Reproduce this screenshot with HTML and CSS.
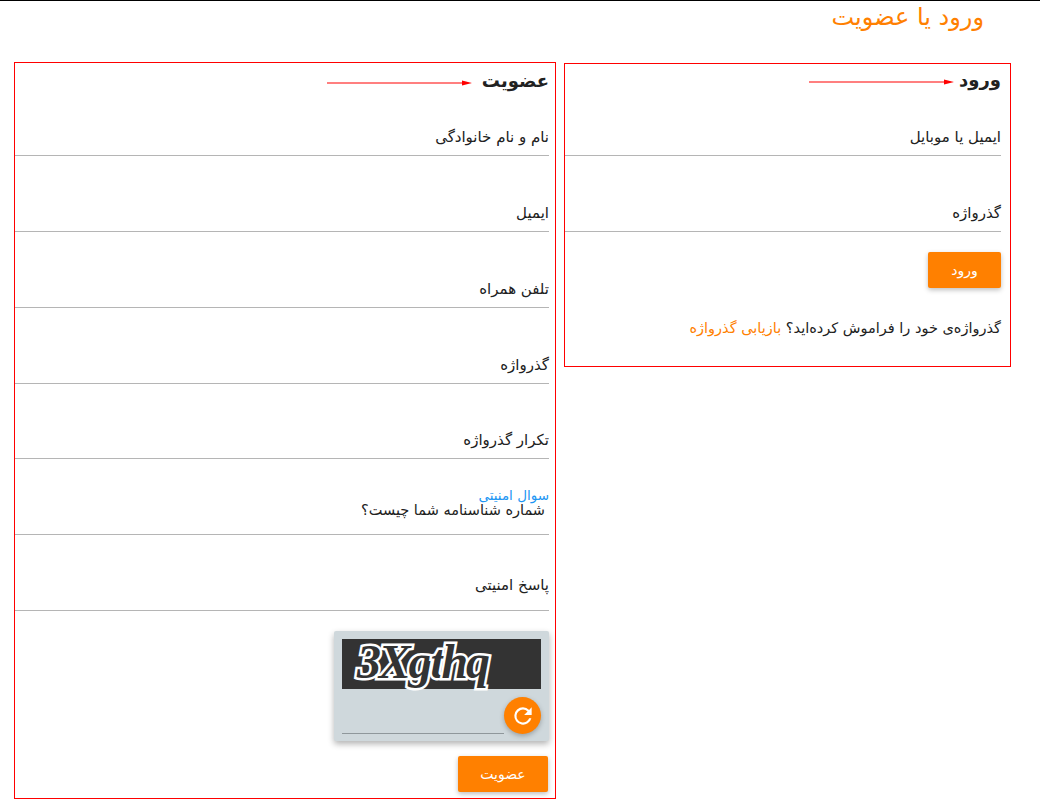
FILE: index.html
```html
<!DOCTYPE html>
<html lang="fa" dir="rtl">
  <head>
    <meta charset="UTF-8">
    <meta name="viewport" content="width=device-width, initial-scale=1.0">
    <title>ورود یا عضویت</title>
    <link rel="stylesheet" href="styles.css">
  </head>
  <body>
    <main class="page">
      <h1 class="page-title">ورود یا عضویت</h1>
      <div class="columns">
        <section class="box box-login">
          <div class="box-head">
            <h2>ورود</h2>
            <svg class="arrow" width="145" height="8" viewBox="0 0 145 8"><path d="M145 4L135 1.5V3.5H0V4.5H135V6.5Z" fill="#f00"/></svg>
          </div>
          <div class="field first"><label>ایمیل یا موبایل</label></div>
          <div class="field"><label>گذرواژه</label></div>
          <button class="btn btn-login" type="button">ورود</button>
          <p class="forgot">گذرواژه‌ی خود را فراموش کرده‌اید؟ <a href="#">بازیابی گذرواژه</a></p>
        </section>
        <section class="box box-signup">
          <div class="box-head">
            <h2>عضویت</h2>
            <svg class="arrow" width="145" height="8" viewBox="0 0 145 8"><path d="M145 4L135 1.5V3.5H0V4.5H135V6.5Z" fill="#f00"/></svg>
          </div>
          <div class="field first"><label>نام و نام خانوادگی</label></div>
          <div class="field"><label>ایمیل</label></div>
          <div class="field"><label>تلفن همراه</label></div>
          <div class="field"><label>گذرواژه</label></div>
          <div class="field short"><label>تکرار گذرواژه</label></div>
          <div class="field question">
            <small>سوال امنیتی</small>
            <span>شماره شناسنامه شما چیست؟</span>
          </div>
          <div class="field answer"><label>پاسخ امنیتی</label></div>
          <div class="captcha">
            <svg class="captcha-img" width="199" height="50" viewBox="0 0 199 50">
              <rect width="199" height="50" fill="#333"/>
              <text x="15" y="39" class="captcha-text" textLength="133">3Xgthq</text>
            </svg>
            <div class="captcha-row">
              <button class="refresh" type="button">
                <svg width="26" height="26" viewBox="0 0 24 24"><path d="M17.65 6.35A7.96 7.96 0 0 0 12 4a8 8 0 1 0 7.73 10h-2.08A6 6 0 1 1 12 6c1.66 0 3.14.69 4.22 1.78L13 11h7V4z" fill="#fff"/></svg>
              </button>
              <div class="captcha-input"></div>
            </div>
          </div>
          <button class="btn btn-signup" type="button">عضویت</button>
        </section>
      </div>
    </main>
  </body>
</html>
```

FILE: styles.css
```css
html, body {
    margin: 0;
    padding: 0;
}
body {
    font-family: "DejaVu Sans", sans-serif;
    color: #212121;
    background: #fff;
    border-top: 1px solid #000;
}
.page {
    height: 806px;
    overflow: hidden;
}
.page-title {
    margin: 0;
    padding-right: 56px;
    height: 61px;
    font-size: 24px;
    font-weight: normal;
    line-height: 32px;
    color: #ff8000;
}
.columns {
    display: flex;
    align-items: flex-start;
    gap: 8px;
    padding-right: 29px;
}
.box {
    box-sizing: border-box;
    border: 1px solid #f00;
}
.box-login {
    width: 447px;
    height: 304px;
    margin-top: 1px;
    padding-right: 9px;
}
.box-signup {
    width: 542px;
    height: 737px;
    padding-right: 6px;
}
.box-head {
    display: flex;
    align-items: center;
    height: 36px;
}
.box-login .box-head {
    gap: 5px;
    padding-bottom: 2px;
}
.box-signup .box-head {
    gap: 10px;
    padding-top: 2px;
}
.box-head h2 {
    margin: 0 0 5px;
    font-size: 18px;
    font-weight: bold;
}
.field {
    box-sizing: border-box;
    display: flex;
    flex-direction: column;
    justify-content: flex-end;
    height: 76px;
    padding-bottom: 8px;
    border-bottom: 1px solid #b5b5b5;
    font-size: 15px;
    line-height: 20px;
}
.field.first {
    height: 54px;
}
.box-signup .field.first {
    height: 55px;
}
.field.short {
    height: 75px;
}
.field.answer {
    padding-bottom: 15px;
}
.field.question {
    padding-bottom: 16px;
    line-height: 15px;
    font-size: 14.5px;
}
.field.question small {
    font-size: 13.5px;
    color: #2196f3;
}
.field.question span {
    padding-right: 4px;
}
.btn {
    display: block;
    border: 0;
    border-radius: 2px;
    background: #ff8000;
    color: #fff;
    font-family: inherit;
    font-size: 14px;
    height: 36px;
    padding: 0;
    box-shadow: 0 2px 5px rgba(0, 0, 0, 0.26);
}
.btn-login {
    width: 73px;
    margin-top: 20px;
}
.btn-signup {
    width: 90px;
    margin-top: 15px;
    margin-right: 1px;
}
.forgot {
    margin: 30px 0 0;
    font-size: 14.5px;
    line-height: 20px;
}
.forgot a {
    color: #ff8000;
    text-decoration: none;
}
.captcha {
    box-sizing: border-box;
    width: 215px;
    height: 110px;
    margin-top: 20px;
    padding: 8px;
    border-radius: 2px;
    background: #cfd8dc;
    box-shadow: 0 3px 6px rgba(0, 0, 0, 0.3);
}
.captcha-img {
    display: block;
    overflow: visible;
}
.captcha-text {
    direction: ltr;
    font-family: "Liberation Serif", serif;
    font-style: italic;
    font-weight: bold;
    font-size: 48px;
    fill: #333;
    stroke: #fff;
    stroke-width: 5px;
    paint-order: stroke;
}
.captcha-row {
    display: flex;
    align-items: flex-end;
    margin-top: 8px;
}
.refresh {
    display: flex;
    align-items: center;
    justify-content: center;
    width: 37px;
    height: 37px;
    padding: 0;
    border: 0;
    border-radius: 50%;
    background: #ff8000;
    box-shadow: 0 2px 5px rgba(0, 0, 0, 0.26);
}
.captcha-input {
    flex: 1;
    height: 0;
    border-bottom: 1px solid #8f979b;
}
```
